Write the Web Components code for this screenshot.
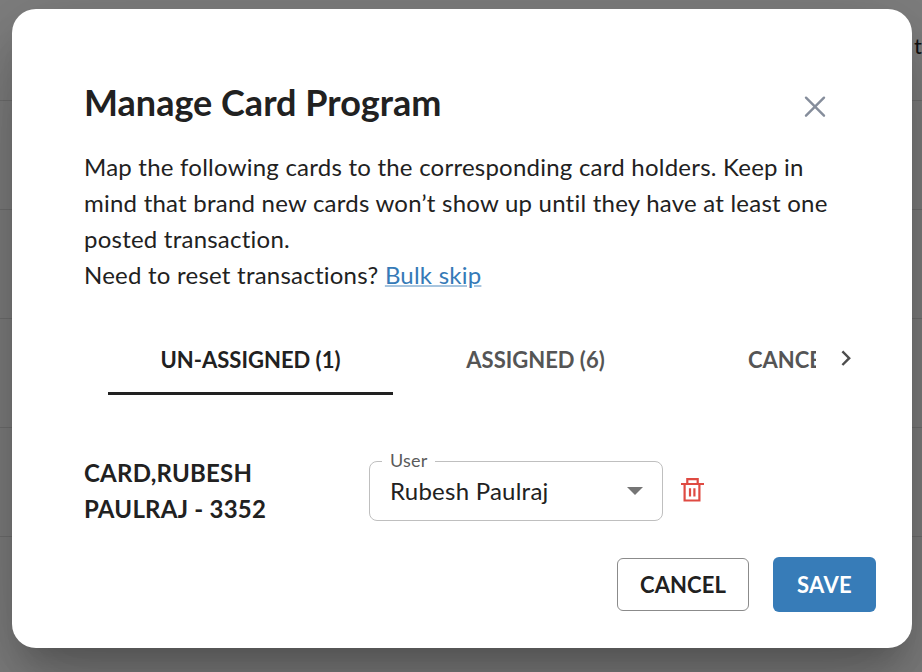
<!DOCTYPE html>
<html lang="en"><head><meta charset="utf-8"><title>Manage Card Program</title>
<style>html,body{margin:0;height:672px;overflow:hidden;background:#7f7f7f}body{font-family:Lato,"Liberation Sans",sans-serif;color:#212121}</style></head>
<body>
<program-page>
<program-dialog>
<dialog-header>Manage Card Program</dialog-header>
<dialog-copy>Map the following cards to the corresponding card holders. Keep in<br>mind that brand new cards won’t show up until they have at least one<br>posted transaction.<br>Need to reset transactions? <text-link>Bulk skip</text-link></dialog-copy>
<tab-bar><tab-item selected>UN-ASSIGNED (1)</tab-item><tab-item>ASSIGNED (6)</tab-item><tab-item cut>CANCE</tab-item></tab-bar>
<card-row><span slot="card">CARD,RUBESH<br>PAULRAJ - 3352</span><select-field label="User">Rubesh Paulraj</select-field></card-row>
<dialog-actions><action-button>CANCEL</action-button><action-button primary>SAVE</action-button></dialog-actions>
</program-dialog>
</program-page>
<script>
const define=(name,html)=>customElements.define(name,class extends HTMLElement{
  constructor(){super();const t=document.createElement('template');t.innerHTML=html;
    this.attachShadow({mode:'open'}).append(t.content.cloneNode(true));
    const l=this.shadowRoot.querySelector('[data-label]');if(l)l.textContent=this.getAttribute('label');}
});
define('program-page',`<style>
:host{display:block;position:relative;box-sizing:border-box;width:922px;height:672px;padding:8.5px 10px 0 12px;overflow:hidden;
background:linear-gradient(#7f7f7f,#7f7f7f) 0 540px no-repeat,repeating-linear-gradient(#7f7f7f 0 108px,#707070 108px 109px) 0 -8px}
.behind{position:absolute;right:0;top:31px;font:22px/30px Lato,sans-serif;color:#111}
</style><span class="behind">t</span><slot></slot>`);
define('program-dialog',`<style>
:host{display:flex;flex-direction:column;position:relative;box-sizing:border-box;width:900px;height:639px;padding:69.5px 36px 0 72px;border-radius:24px;background:#fff;
box-shadow:0 22px 30px -14px rgba(0,0,0,.2),0 48px 76px 6px rgba(0,0,0,.14),0 18px 92px 16px rgba(0,0,0,.12)}
</style><slot></slot>`);
define('dialog-header',`<style>
:host{display:flex;justify-content:space-between;height:71px;padding-right:50px;font-size:36px;line-height:48px;font-weight:700}
h1{font:inherit;margin:0}svg{margin-top:18px}
</style><h1><slot></slot></h1><svg width="22" height="22" viewBox="0 0 22 22" fill="none" stroke="#858d9b" stroke-width="2.4" stroke-linecap="round"><path d="M2 1.7 20 19.7M20 1.7 2 19.7"/></svg>`);
define('dialog-copy',`<style>:host{display:block;height:174px;font-size:24px;line-height:36px;letter-spacing:.23px;white-space:nowrap}</style><slot></slot>`);
define('text-link',`<style>:host{color:#357ab7;text-decoration:underline;text-decoration-color:#a7c5df;text-decoration-thickness:2px}</style><slot></slot>`);
define('tab-bar',`<style>
:host{display:flex;align-items:center;height:72px;margin-left:24px}
.list{display:flex;width:708px;height:72px;overflow:hidden}svg{margin-left:23px}
</style><div class="list"><slot></slot></div><svg width="16" height="20" viewBox="0 0 16 20" fill="none" stroke="#4d4d4d" stroke-width="2.4"><path d="M3.4 2.4 10.2 9.2 3.4 16"/></svg>`);
define('tab-item',`<style>
:host{display:flex;align-items:center;justify-content:center;box-sizing:border-box;flex:0 0 285px;height:72px;color:#555;font-size:22px;line-height:28px;font-weight:700;letter-spacing:0;border-bottom:3px solid transparent;padding-top:4px}
:host([selected]){color:#212121;border-color:#212121}
:host([cut]){justify-content:flex-start;padding-left:70px}
</style><slot></slot>`);
define('card-row',`<style>
:host{display:grid;grid-template-columns:285px 294px 24px;align-items:center;height:72px;margin-top:60px}
.name{font-size:24px;line-height:36px;font-weight:700;letter-spacing:.23px;white-space:nowrap}
svg{margin-left:17px;margin-top:-3px}
</style><div class="name"><slot name="card"></slot></div><slot></slot>
<svg width="24" height="26" viewBox="0 0 24 26" fill="none" stroke="#df4a42" stroke-width="2.2"><path d="M1 7H24M7.3 7V2.2H17.7V7M4.6 7V23.5H19.4V7M10 11.2V19.5M14.4 11.2V19.5"/></svg>`);
define('select-field',`<style>
:host{display:block;position:relative;box-sizing:border-box;height:60px;border:1.5px solid #bfbfbf;border-radius:8px;margin-top:-1px;font-size:24px;line-height:36px}
.box{display:flex;justify-content:space-between;align-items:center;height:58px;padding:0 19px 0 20px}
.label{position:absolute;left:12px;top:-14px;padding:0 8px;background:#fff;color:#5b5b5b;font-size:18px;line-height:24px;letter-spacing:.2px}
.value{letter-spacing:.24px}
</style><span class="label" data-label></span><div class="box"><span class="value"><slot></slot></span><svg width="16" height="8" viewBox="0 0 16 8"><path d="M0 0H16L8 8Z" fill="#757575"/></svg></div>`);
define('dialog-actions',`<style>:host{display:flex;justify-content:flex-end;align-items:center;gap:24px;height:55px;margin-top:29.5px}</style><slot></slot>`);
define('action-button',`<style>
:host{display:flex;align-items:center;justify-content:center;box-sizing:border-box;width:132px;height:53px;border:1px solid #8b8b8b;border-radius:6px;padding-top:1px;font-size:22px;line-height:28px;font-weight:700;letter-spacing:.1px}
:host([primary]){width:103px;height:55px;border:0;background:#377cb8;color:#fff;letter-spacing:.3px}
</style><slot></slot>`);
</script>
</body></html>
